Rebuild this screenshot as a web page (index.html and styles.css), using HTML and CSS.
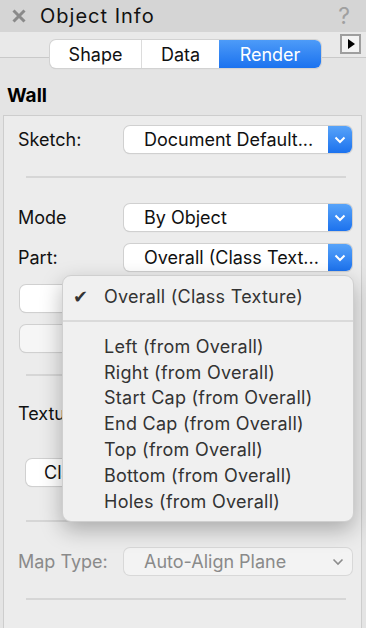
FILE: index.html
```html
<!DOCTYPE html>
<html lang="en">
<head>
    <meta charset="UTF-8">
    <meta name="viewport" content="width=device-width, initial-scale=1.0">
    <title>Object Info</title>
    <link rel="stylesheet" href="styles.css">
</head>
<body>
    <div class="palette">
        <!-- title bar -->
        <div class="titlebar">
            <span class="close"><svg width="14" height="14" viewBox="0 0 14 14"><path d="M1.5 1.5 L12.5 12.5 M12.5 1.5 L1.5 12.5" stroke="#8a8a8a" stroke-width="3"/></svg></span>
            <span class="title">Object Info</span>
            <span class="help">?</span>
        </div>

        <!-- tabs -->
        <div class="tabbar">
            <div class="segmented">
                <span class="seg">Shape</span>
                <span class="seg">Data</span>
                <span class="seg active">Render</span>
            </div>
            <span class="more"><svg width="8" height="10" viewBox="0 0 8 10"><path d="M1 0 L8 5 L1 10 Z" fill="#000"/></svg></span>
        </div>

        <div class="kind">Wall</div>

        <!-- render panel -->
        <div class="panel">
            <div class="row">
                <span class="label">Sketch:</span>
                <div class="popup"><span class="value">Document Default...</span><span class="arrow"><svg width="12" height="8" viewBox="0 0 12 8"><path d="M1.5 1.5 L6 6 L10.5 1.5" fill="none" stroke="#fff" stroke-width="2"/></svg></span></div>
            </div>
            <hr class="divider">

            <div class="row mode">
                <span class="label">Mode</span>
                <div class="popup"><span class="value">By Object</span><span class="arrow"><svg width="12" height="8" viewBox="0 0 12 8"><path d="M1.5 1.5 L6 6 L10.5 1.5" fill="none" stroke="#fff" stroke-width="2"/></svg></span></div>
            </div>
            <div class="row part">
                <span class="label">Part:</span>
                <div class="popup"><span class="value">Overall (Class Text...</span><span class="arrow"><svg width="12" height="8" viewBox="0 0 12 8"><path d="M1.5 1.5 L6 6 L10.5 1.5" fill="none" stroke="#fff" stroke-width="2"/></svg></span></div>
            </div>

            <div class="button wide"></div>
            <div class="button wide dim"></div>
            <hr class="divider">

            <div class="row texture">
                <span class="label">Texture:</span>
            </div>
            <div class="button cls">Class Texture</div>
            <hr class="divider">

            <div class="row maptype">
                <span class="label off">Map Type:</span>
                <div class="popup disabled"><span class="value">Auto-Align Plane</span><span class="arrow"><svg width="12" height="8" viewBox="0 0 12 8"><path d="M1.5 1.5 L6 6 L10.5 1.5" fill="none" stroke="#8c8c8c" stroke-width="1.6"/></svg></span></div>
            </div>
            <hr class="divider">
        </div>

        <!-- open popup menu -->
        <ul class="menu">
            <li class="checked"><span class="check">&#10004;</span>Overall (Class Texture)</li>
            <li class="sep"></li>
            <li>Left (from Overall)</li>
            <li>Right (from Overall)</li>
            <li>Start Cap (from Overall)</li>
            <li>End Cap (from Overall)</li>
            <li>Top (from Overall)</li>
            <li>Bottom (from Overall)</li>
            <li>Holes (from Overall)</li>
        </ul>
    </div>
</body>
</html>
```

FILE: styles.css
```css
* {
    margin: 0;
    padding: 0;
    box-sizing: border-box;
}

body {
    font-family: Inter, "Liberation Sans", Arial, sans-serif;
    background-color: #e4e4e4;
    width: 366px;
    height: 628px;
    overflow: hidden;
}

.palette {
    position: relative;
    height: 628px;
}

/* title bar */
.titlebar {
    height: 32px;
    background-color: #d5d5d5;
    display: flex;
    align-items: center;
    padding: 0 12px;
}

.close {
    width: 28px;
    display: flex;
    align-items: center;
}

.title {
    font-size: 20px;
    letter-spacing: 1px;
    color: #111;
    flex: 1;
}

.help {
    color: #a0a0a0;
    font-size: 23px;
    margin-right: 4px;
}

/* tabs */
.tabbar {
    height: 43px;
    background: linear-gradient(#e9e9e9 0, #e9e9e9 25px, #c9c9c9 25px, #c9c9c9 26px, #e4e4e4 26px);
    display: flex;
    align-items: flex-start;
    padding: 8px 5px 0 50px;
}

.segmented {
    display: flex;
    height: 28px;
    border-radius: 6px;
    background-color: #fff;
    box-shadow: 0 0 0 1px #d2d2d2, 0 1px 1px rgba(0, 0, 0, 0.15);
    font-size: 18px;
    overflow: hidden;
}

.seg {
    display: flex;
    align-items: center;
    justify-content: center;
    color: #111;
}

.seg:nth-child(1) {
    width: 92px;
    border-right: 1px solid #dcdcdc;
}

.seg:nth-child(2) {
    width: 77px;
}

.seg.active {
    width: 102px;
    color: #fff;
    background: linear-gradient(#4d9bf8, #1b72ef);
}

.more {
    margin-left: auto;
    margin-top: -6px;
    width: 21px;
    height: 20px;
    border: 2px solid #9e9e9e;
    background-color: #f3f3f3;
    display: flex;
    align-items: center;
    justify-content: center;
}

.kind {
    font-size: 19px;
    font-weight: bold;
    padding: 9px 7px 0;
    height: 40px;
}

/* panel */
.panel {
    margin: 0 4px 0 3px;
    height: 520px;
    background-color: #ececec;
    border: 1px solid #cdcdcd;
    padding: 10px 9px 0 14px;
}

.row {
    display: flex;
    align-items: center;
    height: 27px;
}

.label {
    width: 106px;
    font-size: 18px;
    color: #111;
    white-space: nowrap;
}

.popup {
    flex: 1;
    height: 27px;
    display: flex;
    background-color: #fff;
    border-radius: 6px;
    box-shadow: 0 0 0 1px #d0d0d0, 0 1px 1px rgba(0, 0, 0, 0.18);
    overflow: hidden;
}

.popup .value {
    flex: 1;
    font-size: 18px;
    color: #111;
    padding-left: 20px;
    line-height: 27px;
    white-space: nowrap;
    overflow: hidden;
}

.popup .arrow {
    width: 24px;
    display: flex;
    align-items: center;
    justify-content: center;
    background: linear-gradient(#57a3f9, #1c72ee);
}

.popup.disabled {
    background-color: #f3f3f3;
    box-shadow: 0 0 0 1px #d8d8d8;
}

.popup.disabled .value {
    color: #8a8a8a;
}

.popup.disabled .arrow {
    background: none;
    width: 28px;
}

.divider {
    border: none;
    height: 2px;
    background-color: #d6d6d6;
    margin: 23px 6px 26px 8px;
}

.row.part {
    margin-top: 13px;
}

.button {
    height: 27px;
    background-color: #fff;
    border-radius: 6px;
    box-shadow: 0 0 0 1px #d0d0d0, 0 1px 1px rgba(0, 0, 0, 0.15);
    font-size: 18px;
    color: #111;
}

.button.wide {
    width: 160px;
    margin-top: 14px;
    margin-left: 2px;
}

.button.dim {
    background-color: #f6f6f6;
    margin-top: 13px;
}

.panel .button.dim + .divider {
    margin-top: 22px;
}

.row.texture {
    margin-top: -2px;
}

.button.cls {
    width: 140px;
    margin: 32px 0 0 8px;
    padding-left: 18px;
    line-height: 27px;
}

.button.cls + .divider {
    margin-top: 34px;
}

.row.maptype .label {
    color: #8a8a8a;
}

/* open popup menu */
.menu {
    position: absolute;
    left: 62px;
    top: 275px;
    width: 292px;
    height: 247px;
    list-style: none;
    background-color: #f0f0f0;
    border-radius: 9px;
    border: 1px solid #cfcfcf;
    box-shadow: 0 8px 22px rgba(0, 0, 0, 0.28);
    padding-top: 8px;
}

.menu li {
    font-size: 18px;
    letter-spacing: 0.25px;
    color: #333;
    height: 25.8px;
    line-height: 25.8px;
    padding-left: 41px;
    position: relative;
}

.menu .check {
    position: absolute;
    left: 10px;
    font-size: 18px;
    color: #333;
}

.menu li.sep {
    height: 2px;
    background-color: #dadada;
    margin: 10px 0 12px;
}
```
